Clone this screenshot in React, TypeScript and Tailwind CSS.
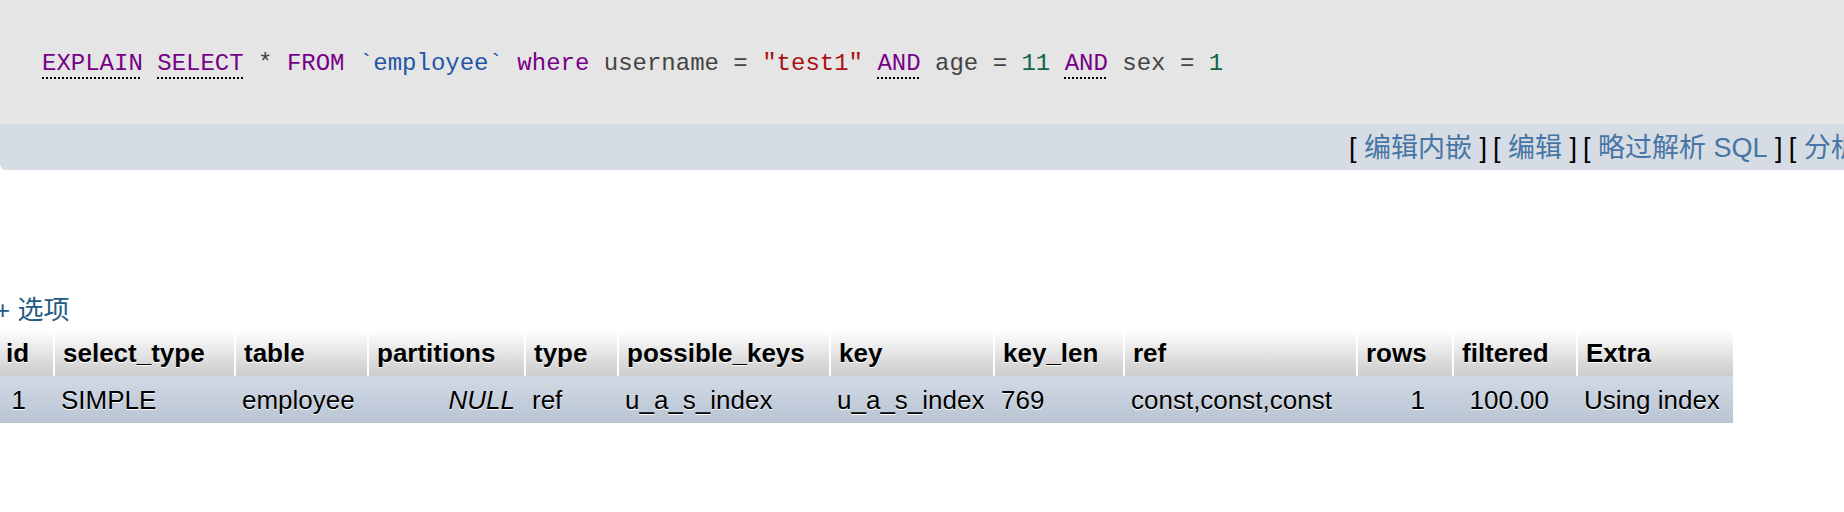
import React from "react";

type TToken = { text: string; kind: "kw" | "id" | "str" | "num" | "plain" };

const sqlTokens: TToken[] = [
  { text: "EXPLAIN", kind: "kw" },
  { text: " ", kind: "plain" },
  { text: "SELECT", kind: "kw" },
  { text: " * ", kind: "plain" },
  { text: "FROM", kind: "plain" },
  { text: " ", kind: "plain" },
  { text: "`employee`", kind: "id" },
  { text: " ", kind: "plain" },
  { text: "where", kind: "plain" },
  { text: " username = ", kind: "plain" },
  { text: '"test1"', kind: "str" },
  { text: " ", kind: "plain" },
  { text: "AND", kind: "kw" },
  { text: " age = ", kind: "plain" },
  { text: "11", kind: "num" },
  { text: " ", kind: "plain" },
  { text: "AND", kind: "kw" },
  { text: " sex = ", kind: "plain" },
  { text: "1", kind: "num" },
];

const purpleWords = ["FROM", "where"];

const columns = [
  { name: "id", width: "w-[55px]" },
  { name: "select_type", width: "w-[181px]" },
  { name: "table", width: "w-[133px]" },
  { name: "partitions", width: "w-[157px]" },
  { name: "type", width: "w-[93px]" },
  { name: "possible_keys", width: "w-[212px]" },
  { name: "key", width: "w-[164px]" },
  { name: "key_len", width: "w-[130px]" },
  { name: "ref", width: "w-[233px]" },
  { name: "rows", width: "w-[96px]" },
  { name: "filtered", width: "w-[124px]" },
  { name: "Extra", width: "w-[157px]" },
];

type TCell = { value: string; align: "num" | "null" | "text" };

const row: TCell[] = [
  { value: "1", align: "num" },
  { value: "SIMPLE", align: "text" },
  { value: "employee", align: "text" },
  { value: "NULL", align: "null" },
  { value: "ref", align: "text" },
  { value: "u_a_s_index", align: "text" },
  { value: "u_a_s_index", align: "text" },
  { value: "769", align: "text" },
  { value: "const,const,const", align: "text" },
  { value: "1", align: "num" },
  { value: "100.00", align: "num" },
  { value: "Using index", align: "text" },
];

const links = ["编辑内嵌", "编辑", "略过解析 SQL", "分析 SQL", "创建 PHP 代码", "刷新"];

const tokenClass = (token: TToken) => {
  if (token.kind === "kw") {
    return "text-[#770088] underline decoration-dotted decoration-black decoration-2 underline-offset-[7px]";
  }
  if (token.kind === "id") return "text-[#1f56a8]";
  if (token.kind === "str") return "text-[#aa1111]";
  if (token.kind === "num") return "text-[#116644]";
  if (purpleWords.includes(token.text)) return "text-[#770088]";
  return "text-[#444444]";
};

const App = () => {
  return (
    <div className="h-[512px] w-[1844px] overflow-hidden bg-white font-['Liberation_Sans','Noto_Sans_CJK_SC',sans-serif] text-black">
      {/* query box */}
      <div className="flex h-[124px] items-center bg-[#e5e5e5] pl-[42px] pt-[4px]">
        <pre className="font-['Liberation_Mono',monospace] text-[24px] leading-[30px]">
          {sqlTokens.map((token, i) => (
            <span key={i} className={tokenClass(token)}>
              {token.text}
            </span>
          ))}
        </pre>
      </div>

      <div className="flex h-[46px] items-center overflow-hidden whitespace-nowrap rounded-bl-[6px] bg-[#d5dce3] pl-[1349px] pt-[2px] text-[27px] leading-none">
        {links.map((link) => (
          <span key={link} className="mr-[6px] shrink-0">
            [&nbsp;<a className="text-[#4775a5]">{link}</a>&nbsp;]
          </span>
        ))}
      </div>

      {/* explain result */}
      <div className="mt-[122px] -ml-[5px]">
        <div className="h-[34px] text-[26px] leading-[36px] text-[#235a81]">
          + 选项
        </div>

        <table className="mt-[4px] ml-[3px] w-[1735px] table-fixed border-separate border-spacing-0 text-[26px]">
          <colgroup>
            {columns.map((col) => (
              <col key={col.name} className={col.width} />
            ))}
          </colgroup>
          <thead>
            <tr>
              {columns.map((col, i) => (
                <th
                  key={col.name}
                  className={`h-[46px] bg-gradient-to-b from-white to-[#cbcbcb] px-[8px] text-left font-bold leading-none [text-shadow:0_1px_0_#fff] ${
                    i > 0 ? "border-l-2 border-white" : ""
                  }`}
                >
                  {col.name}
                </th>
              ))}
            </tr>
          </thead>
          <tbody>
            <tr>
              {row.map((cell, i) => (
                <td
                  key={i}
                  className={`h-[47px] bg-gradient-to-b from-[#d2d9e3] to-[#b9c5d5] leading-none whitespace-nowrap [text-shadow:0_1px_0_#fff] ${
                    cell.align === "num"
                      ? "pr-[27px] text-right"
                      : cell.align === "null"
                        ? "pr-[9px] text-right italic"
                        : "pl-[8px] text-left"
                  }`}
                >
                  {cell.value}
                </td>
              ))}
            </tr>
          </tbody>
        </table>
      </div>
    </div>
  );
};

export default App;
